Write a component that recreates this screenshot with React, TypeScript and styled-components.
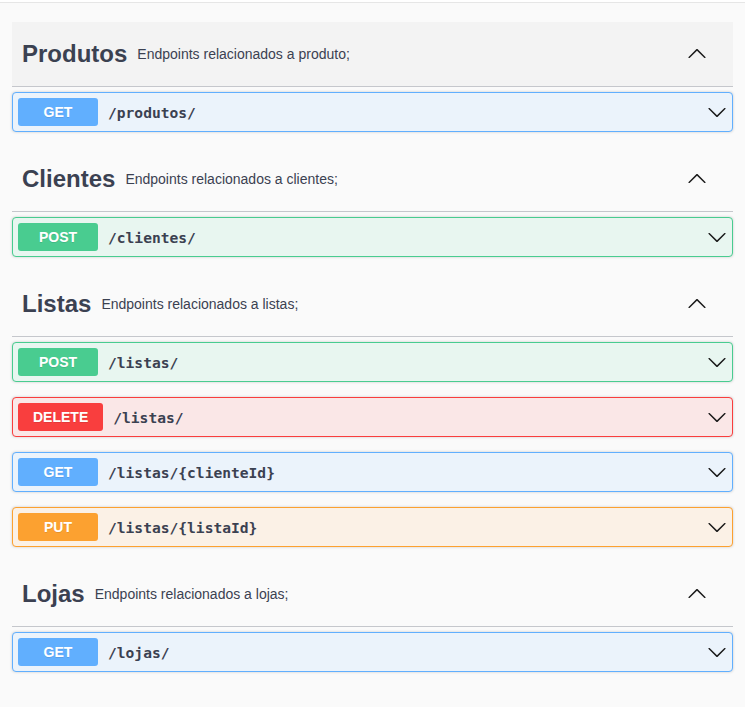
import styled, { createGlobalStyle } from "styled-components";

type Method = "GET" | "POST" | "DELETE" | "PUT";

interface Operation {
  method: Method;
  path: string;
}

interface Tag {
  name: string;
  description: string;
  highlighted?: boolean;
  operations: Operation[];
}

const methodColors: Record<Method, { main: string; bg: string }> = {
  GET: { main: "#61affe", bg: "#ebf3fb" },
  POST: { main: "#49cc90", bg: "#e8f6f0" },
  DELETE: { main: "#f93e3e", bg: "#fae7e7" },
  PUT: { main: "#fca130", bg: "#fbf1e6" },
};

const tags: Tag[] = [
  {
    name: "Produtos",
    description: "Endpoints relacionados a produto;",
    highlighted: true,
    operations: [{ method: "GET", path: "/produtos/" }],
  },
  {
    name: "Clientes",
    description: "Endpoints relacionados a clientes;",
    operations: [{ method: "POST", path: "/clientes/" }],
  },
  {
    name: "Listas",
    description: "Endpoints relacionados a listas;",
    operations: [
      { method: "POST", path: "/listas/" },
      { method: "DELETE", path: "/listas/" },
      { method: "GET", path: "/listas/{clienteId}" },
      { method: "PUT", path: "/listas/{listaId}" },
    ],
  },
  {
    name: "Lojas",
    description: "Endpoints relacionados a lojas;",
    operations: [{ method: "GET", path: "/lojas/" }],
  },
];

function Arrow({ up }: { up?: boolean }) {
  return (
    <ArrowIcon viewBox="0 0 20 20" $up={up}>
      <path d="M17.418 6.109c.272-.268.709-.268.979 0s.271.701 0 .969l-7.908 7.83c-.27.268-.707.268-.979 0l-7.908-7.83c-.27-.268-.27-.701 0-.969.271-.268.709-.268.979 0L10 13.25l7.418-7.141z" />
    </ArrowIcon>
  );
}

function App() {
  return (
    <>
      <GlobalStyle />
      <TopEdge />
      <Wrapper>
        {tags.map((tag) => (
          <Section key={tag.name}>
            <TagHeader $highlighted={tag.highlighted}>
              <TagName>{tag.name}</TagName>
              <TagDescription>{tag.description}</TagDescription>
              <Arrow up />
            </TagHeader>
            {tag.operations.map((op) => (
              <OpBlock key={op.method + op.path} $method={op.method}>
                <MethodBadge $method={op.method}>{op.method}</MethodBadge>
                <OpPath>{op.path}</OpPath>
                <Arrow />
              </OpBlock>
            ))}
          </Section>
        ))}
      </Wrapper>
    </>
  );
}

const GlobalStyle = createGlobalStyle`
  body {
    margin: 0;
    background: #fafafa;
    font-family: "Liberation Sans", Arial, sans-serif;
    color: #3b4151;
  }
`;

const TopEdge = styled.div`
  height: 2px;
  background: #ffffff;
  border-bottom: 1px solid #e6e6e6;
`;

const Wrapper = styled.div`
  padding: 19px 12px 20px;
`;

const Section = styled.section`
  display: flex;
  flex-direction: column;
`;

const TagHeader = styled.h3<{ $highlighted?: boolean }>`
  display: flex;
  align-items: center;
  box-sizing: border-box;
  height: 65px;
  margin: 0 0 5px;
  padding: 0 26px 0 10px;
  border-bottom: 1px solid #c5c7cc;
  background: ${(p) => (p.$highlighted ? "#f3f3f3" : "transparent")};
`;

const TagName = styled.span`
  font-size: 24px;
  font-weight: 700;
  color: #3b4151;
`;

const TagDescription = styled.small`
  flex: 1;
  padding: 0 10px;
  font-size: 14px;
  font-weight: 400;
  color: #3b4151;
`;

const ArrowIcon = styled.svg<{ $up?: boolean }>`
  width: 20px;
  height: 20px;
  flex-shrink: 0;
  margin-left: auto;
  fill: #1a1a1a;
  transform: ${(p) => (p.$up ? "rotate(180deg)" : "none")};
`;

const OpBlock = styled.div<{ $method: Method }>`
  display: flex;
  align-items: center;
  box-sizing: border-box;
  height: 40px;
  margin: 0 0 15px;
  padding: 5px;
  border: 1px solid ${(p) => methodColors[p.$method].main};
  border-radius: 4px;
  background: ${(p) => methodColors[p.$method].bg};
  box-shadow: 0 0 3px rgba(0, 0, 0, 0.19);
`;

const MethodBadge = styled.span<{ $method: Method }>`
  display: flex;
  align-items: center;
  justify-content: center;
  box-sizing: border-box;
  min-width: 80px;
  height: 28px;
  padding: 0 15px;
  border-radius: 3px;
  background: ${(p) => methodColors[p.$method].main};
  color: #ffffff;
  font-size: 14px;
  font-weight: 700;
  text-shadow: 0 1px 0 rgba(0, 0, 0, 0.1);
`;

const OpPath = styled.span`
  padding: 0 10px;
  font-family: "DejaVu Sans Mono", "Liberation Mono", monospace;
  font-size: 14.6px;
  font-weight: 700;
  color: #3b4151;
`;

export default App;
